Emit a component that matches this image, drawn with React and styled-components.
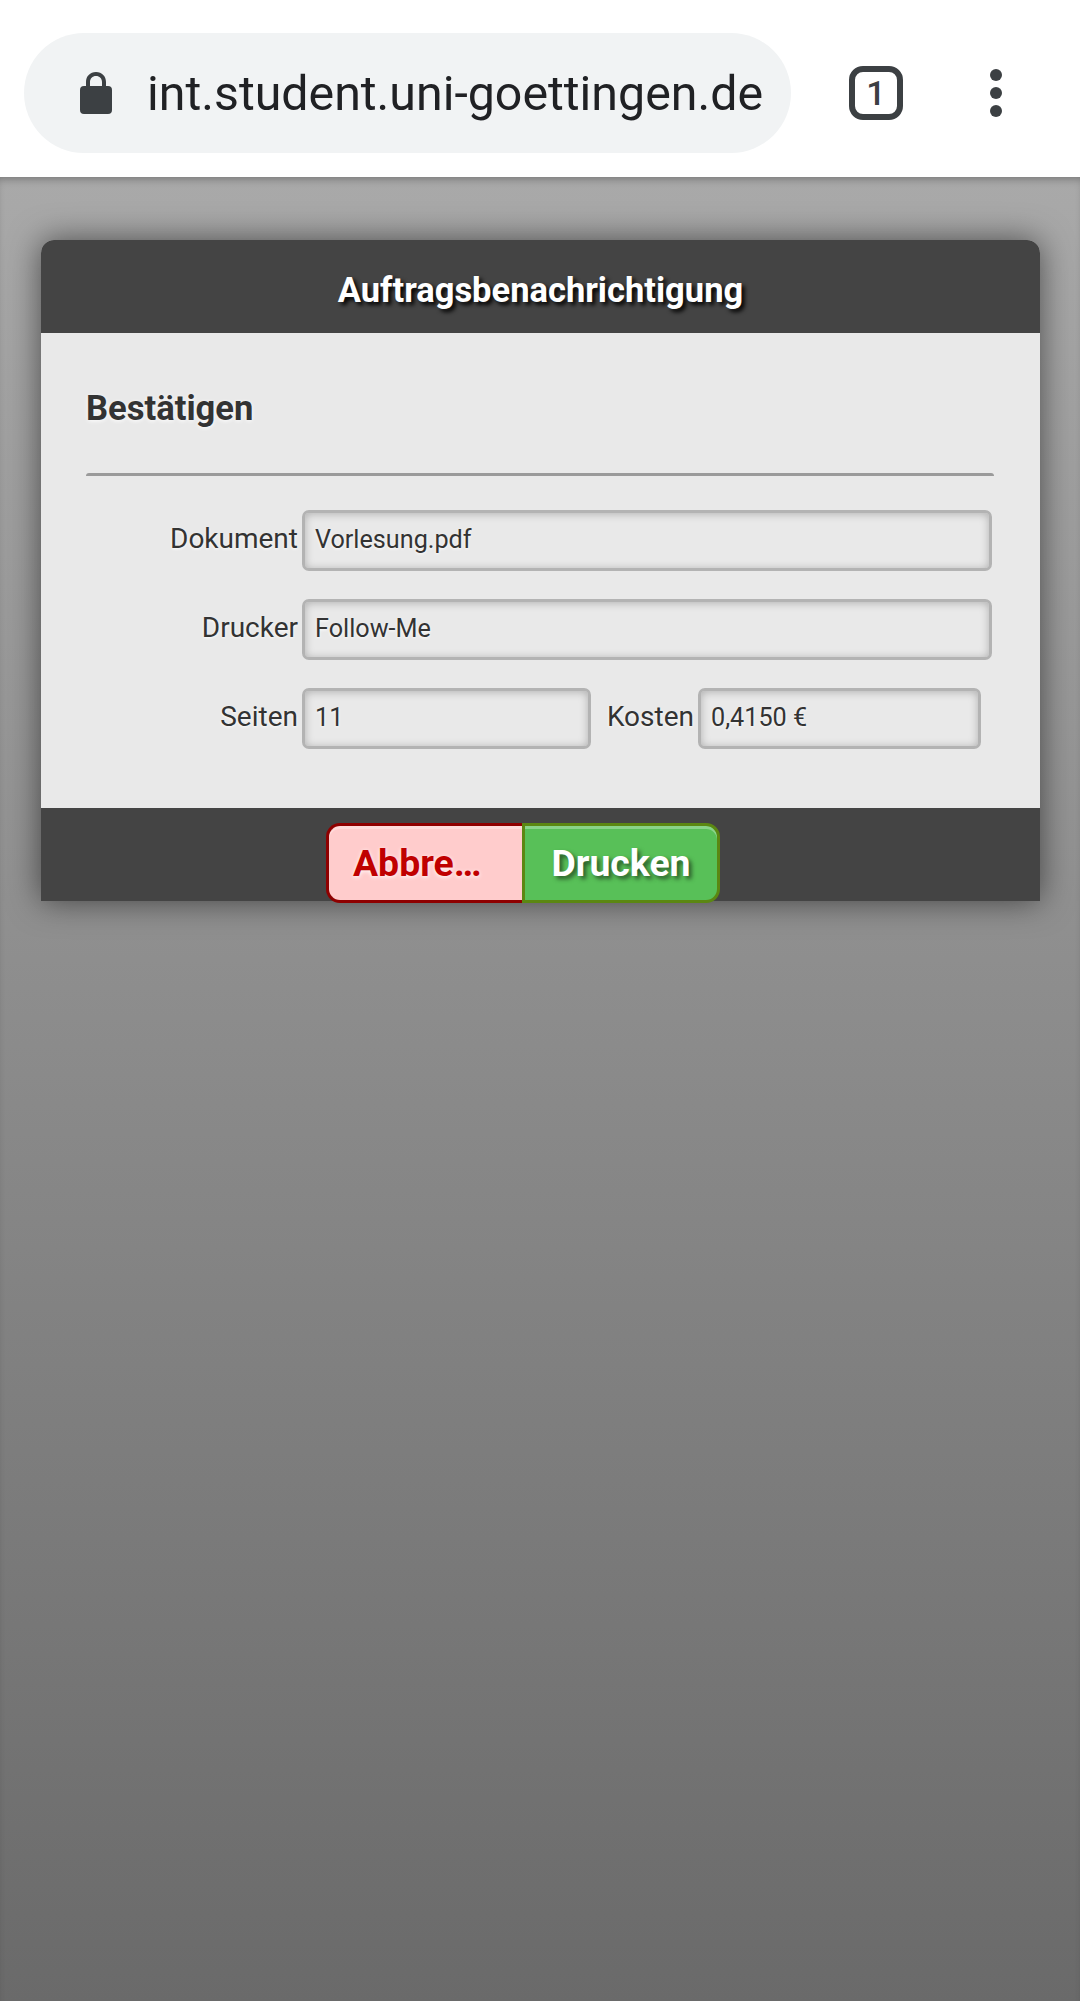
import React from 'react'
import styled, { createGlobalStyle } from 'styled-components'

const GlobalStyle = createGlobalStyle`
  html, body {
    margin: 0;
    padding: 0;
    height: 100%;
  }
  body {
    font-family: Roboto, "Liberation Sans", sans-serif;
    background: #6a6a6a;
  }
  * {
    box-sizing: border-box;
  }
`

const Screen = styled.div`
  width: 1080px;
  height: 2001px;
  display: flex;
  flex-direction: column;
  overflow: hidden;
`

const Toolbar = styled.header`
  height: 177px;
  flex: none;
  background: #fff;
  display: flex;
  align-items: center;
  padding: 9px 0 0 24px;
`

const UrlPill = styled.div`
  width: 767px;
  height: 120px;
  border-radius: 60px;
  background: #f1f3f4;
  display: flex;
  align-items: center;
  padding-left: 56px;
`

const UrlText = styled.span`
  margin-left: 35px;
  font-size: 48.3px;
  color: #202124;
  white-space: nowrap;
`

const TabCount = styled.div`
  width: 54px;
  height: 54px;
  margin-left: 58px;
  border: 6px solid #3c4043;
  border-radius: 14px;
  display: flex;
  align-items: center;
  justify-content: center;
  font-size: 34px;
  font-weight: 500;
  color: #3c4043;
`

const MenuDots = styled.div`
  margin-left: 87px;
  display: flex;
  flex-direction: column;
  gap: 6px;
`

const Dot = styled.span`
  width: 12px;
  height: 12px;
  border-radius: 50%;
  background: #3c4043;
`

const Backdrop = styled.main`
  flex: 1;
  padding: 63px 40px 0 41px;
  background: linear-gradient(#a9a9a9, #6a6a6a);
  box-shadow: inset 0 6px 8px -4px rgba(0, 0, 0, 0.3);
`

const Dialog = styled.section`
  width: 999px;
  border-radius: 13px 13px 0 0;
  box-shadow: 0 0 32px rgba(0, 0, 0, 0.55);
  background: #e9e9e9;
`

const DialogHeader = styled.div`
  height: 93px;
  padding-top: 6px;
  border-radius: 13px 13px 0 0;
  background: #444;
  display: flex;
  align-items: center;
  justify-content: center;
  color: #fff;
  font-size: 34.5px;
  font-weight: 700;
  text-shadow: 3px 3px 4px #000;
`

const DialogBody = styled.div`
  height: 475px;
  padding: 55px 46px 0 45px;
`

const Title = styled.h2`
  margin: 0;
  height: 85px;
  line-height: 40px;
  font-size: 34.6px;
  font-weight: 700;
  color: #333;
  text-shadow: 0 1px 4px #fff;
`

const Divider = styled.hr`
  margin: 0 0 34px;
  height: 3px;
  border: 0;
  border-top: 3px solid #9a9a9a;
  border-radius: 3px 3px 0 0;
`

const FieldRow = styled.div`
  display: flex;
  align-items: center;
  height: 61px;
  margin-bottom: 28px;
`

const Label = styled.label`
  width: ${p => p.$width}px;
  padding: 0 4px 5px 0;
  flex: none;
  text-align: right;
  font-size: 28px;
  color: #333;
  text-shadow: 0 1px 3px #fff;
`

const Field = styled.div`
  width: ${p => p.$width}px;
  height: 61px;
  flex: none;
  padding: 0 10px 3px;
  display: flex;
  align-items: center;
  border: 3px solid #b3b3b3;
  border-radius: 7px;
  background: #e9e9e9;
  box-shadow: inset 0 1px 8px rgba(0, 0, 0, 0.25);
  font-size: 25.2px;
  color: #333;
  text-shadow: 0 1px 3px #fff;
`

const DialogFooter = styled.div`
  height: 93px;
  background: #444;
  padding: 15px 0 0 285px;
  display: flex;
  align-items: flex-start;
`

const Button = styled.button`
  width: ${p => p.$width}px;
  height: 80px;
  flex: none;
  font-family: inherit;
  font-size: 37.4px;
  font-weight: 700;
  border-style: solid;
  border-width: 3px;
  box-shadow: inset 0 3px 0 rgba(255, 255, 255, 0.3);
`

const CancelButton = styled(Button)`
  padding: 0 0 0 24px;
  text-align: left;
  border-color: #8e0000;
  border-right: 0;
  border-radius: 14px 0 0 14px;
  background: #fcc;
  color: #c00000;
  text-shadow: 0 1px 4px #fff;
`

const ConfirmButton = styled(Button)`
  padding: 0;
  border-color: #5b8712;
  border-radius: 0 14px 14px 0;
  background: #58c058;
  color: #fff;
  text-shadow: 3px 3px 4px #2a5a2a;
`

function LockIcon() {
  return (
    <svg width="32" height="42" viewBox="0 0 32 42">
      <path
        fill="#3c4043"
        d="M16 0C10 0 6 4.400 6 10v4H4a4 4 0 0 0-4 4v20a4 4 0 0 0 4 4h24a4 4 0 0 0 4-4V18a4 4 0 0 0-4-4h-2v-4C26 4.400 22 0 16 0zm0 4c3.600 0 6 2.600 6 6v4H10v-4c0-3.400 2.400-6 6-6z"
      />
    </svg>
  )
}

export default function App() {
  return (
    <Screen>
      <GlobalStyle />
      <Toolbar>
        <UrlPill>
          <LockIcon />
          <UrlText>int.student.uni-goettingen.de</UrlText>
        </UrlPill>
        <TabCount>1</TabCount>
        <MenuDots>
          <Dot />
          <Dot />
          <Dot />
        </MenuDots>
      </Toolbar>
      <Backdrop>
        <Dialog>
          <DialogHeader>Auftragsbenachrichtigung</DialogHeader>
          <DialogBody>
            <Title>Bestätigen</Title>
            <Divider />
            <FieldRow>
              <Label $width={216}>Dokument</Label>
              <Field $width={690}>Vorlesung.pdf</Field>
            </FieldRow>
            <FieldRow>
              <Label $width={216}>Drucker</Label>
              <Field $width={690}>Follow-Me</Field>
            </FieldRow>
            <FieldRow>
              <Label $width={216}>Seiten</Label>
              <Field $width={289}>11</Field>
              <Label $width={107}>Kosten</Label>
              <Field $width={283}>0,4150 €</Field>
            </FieldRow>
          </DialogBody>
          <DialogFooter>
            <CancelButton $width={196}>Abbre…</CancelButton>
            <ConfirmButton $width={198}>Drucken</ConfirmButton>
          </DialogFooter>
        </Dialog>
      </Backdrop>
    </Screen>
  )
}
